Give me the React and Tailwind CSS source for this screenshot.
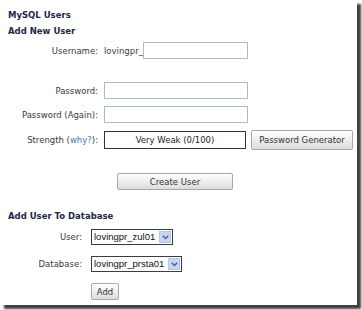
import React from 'react';

// small helpers so the rows stay readable
const Label = ({ children, w = 'w-[98px]' }) => (
  <div className={`${w} shrink-0 text-right text-[#3a3a3a]`}>{children}</div>
);

const TextBox = ({ w = 'w-[144px]' }) => (
  <div className={`${w} h-[17px] border border-[#a9bcd0] bg-white`} />
);

const Button = ({ children, className = '' }) => (
  <div
    className={`flex items-center justify-center border border-[#a8a8a8] rounded-[2px] bg-gradient-to-b from-white to-[#dcdcdc] text-[#333] ${className}`}
  >
    {children}
  </div>
);

const Select = ({ value, w }) => (
  <div className={`${w} h-[16px] flex items-center border border-[#3c3c3c] bg-white`}>
    <span className="flex-1 pl-[2px] font-['Liberation_Sans',Arial,sans-serif] text-[9.5px] leading-none text-[#111] whitespace-nowrap">
      {value}
    </span>
    <span className="w-[12px] h-[12px] mr-[1px] flex items-center justify-center border border-[#b4c6ea] bg-[#c8d6f4]">
      <svg width="7" height="5" viewBox="0 0 7 5">
        <path d="M0.8 0.8 L3.5 3.6 L6.2 0.8" fill="none" stroke="#4d6185" strokeWidth="1.4" />
      </svg>
    </span>
  </div>
);

export default function App() {
  return (
    <div className="w-[362px] h-[310px] bg-white font-['DejaVu_Sans',Verdana,sans-serif] text-[8.5px] leading-[12px]">
      <div className="w-[357px] h-[305px] bg-white shadow-[4px_4px_2px_rgba(0,0,0,0.75)] pl-[8px] pt-[9px] flex flex-col">
        <h2 className="h-[12px] font-bold text-[#1b2848]">MySQL Users</h2>
        <h3 className="h-[12px] mt-[4px] font-bold text-[#1b2848]">Add New User</h3>

        <div className="mt-[5px] w-[240px] flex items-center">
          <Label w="w-[90px]">Username:</Label>
          <span className="ml-[6px] text-[#3a3a3a]">lovingpr_</span>
          <div className="flex-1 h-[17px] border border-[#a9bcd0] bg-white" />
        </div>

        <div className="mt-[23px] flex items-center">
          <Label w="w-[90px]">Password:</Label>
          <div className="ml-[6px]"><TextBox /></div>
        </div>

        <div className="mt-[7px] flex items-center">
          <Label w="w-[90px]">Password (Again):</Label>
          <div className="ml-[6px]"><TextBox /></div>
        </div>

        <div className="mt-[7px] flex items-center h-[20px]">
          <Label w="w-[90px]">
            Strength (<span className="text-[#3a7bb8]">why?</span>):
          </Label>
          <div className="ml-[6px] w-[142px] h-[18px] border border-[#333] flex items-center justify-center text-[#222]">
            Very Weak (0/100)
          </div>
          <Button className="ml-[5px] w-[102px] h-[20px]">Password Generator</Button>
        </div>

        <Button className="mt-[23px] ml-[109px] w-[116px] h-[17px]">Create User</Button>

        <h3 className="h-[12px] mt-[20px] font-bold text-[#1b2848]">Add User To Database</h3>

        <div className="mt-[7px] flex items-center">
          <Label w="w-[74px]">User:</Label>
          <div className="ml-[9px]"><Select value="lovingpr_zul01" w="w-[82px]" /></div>
        </div>

        <div className="mt-[11px] flex items-center">
          <Label w="w-[74px]">Database:</Label>
          <div className="ml-[9px]"><Select value="lovingpr_prsta01" w="w-[91px]" /></div>
        </div>

        <Button className="mt-[11px] ml-[83px] w-[28px] h-[17px]">Add</Button>
      </div>
    </div>
  );
}
